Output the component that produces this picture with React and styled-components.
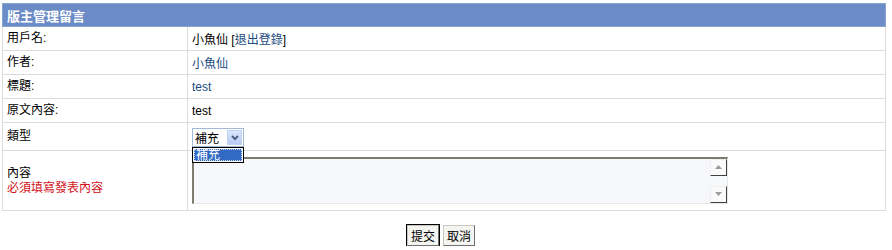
import styled, { createGlobalStyle } from "styled-components";

const Global = createGlobalStyle`
  body {
    margin: 0;
    background: #fff;
    font-family: "Liberation Sans", "Noto Sans CJK TC", Arial, sans-serif;
    font-size: 12px;
    color: #000;
  }
`;

const Page = styled.div`
  padding: 3px 6px 0 2px;
`;

const Table = styled.table`
  width: 884px;
  border-collapse: collapse;
  border: 1px solid #dcdcdc;
`;

const HeadCell = styled.th`
  background: #6b8cc6;
  color: #fff;
  font-weight: bold;
  text-align: left;
  height: 22px;
  padding: 0 4px;
  font-size: 13px;
  border: 1px solid #8aa4d2;
`;

const Label = styled.td`
  width: 176px;
  padding: 0 4px;
  height: ${(p) => p.$h || 23}px;
  border: 1px solid #dcdcdc;
  vertical-align: middle;
  line-height: 15px;
`;

const Value = styled.td`
  padding: 0 4px;
  border: 1px solid #dcdcdc;
  vertical-align: middle;
`;

const Link = styled.a`
  color: #1b4a80;
  text-decoration: none;
`;

const Warn = styled.div`
  color: #d2121a;
`;

const SelectWrap = styled.div`
  position: relative;
  display: inline-flex;
  align-items: center;
  width: 52px;
  height: 19px;
  box-sizing: border-box;
  border: 1px solid #a5b9d9;
  background: #fff;
  padding-left: 2px;
  margin-top: 2px;
`;

const SelectText = styled.span`
  flex: 1;
`;

const Arrow = styled.span`
  width: 15px;
  height: 15px;
  margin-right: 1px;
  background: linear-gradient(#dbe6fb, #b7cbf3);
  border: 1px solid #c3d3f3;
  box-sizing: border-box;
  display: flex;
  align-items: center;
  justify-content: center;
`;

const DropList = styled.div`
  position: absolute;
  left: -1px;
  top: 18px;
  width: 52px;
  height: 16px;
  box-sizing: border-box;
  border: 1px solid #000;
  background: #fff;
  padding: 1px;
  z-index: 2;
`;

const DropItem = styled.div`
  background: #316ac5;
  color: #fff;
  height: 12px;
  line-height: 12px;
  padding-left: 1px;
  border: 1px dotted #c8d4ec;
  box-sizing: border-box;
  height: 12px;
  display: flex;
  align-items: center;
`;

const Area = styled.div`
  display: flex;
  width: 536px;
  height: 47px;
  box-sizing: border-box;
  border-top: 2px solid #7d7a6e;
  border-left: 2px solid #7d7a6e;
  border-right: 1px solid #e8e8e8;
  border-bottom: 1px solid #e8e8e8;
  background: #f6f8fc;
  margin: 4px 0 5px;
`;

const AreaText = styled.div`
  flex: 1;
`;

const Scroll = styled.div`
  width: 17px;
  display: flex;
  flex-direction: column;
  justify-content: space-between;
  background: #f6f8fc;
`;

const ScrollBtn = styled.div`
  height: 17px;
  box-sizing: border-box;
  background: #fafafa;
  border-right: 1px solid #404040;
  border-bottom: 1px solid #404040;
  border-top: 1px solid #f0f0f0;
  border-left: 1px solid #f0f0f0;
  display: flex;
  align-items: center;
  justify-content: center;
`;

const Tri = ({ up }) => (
  <svg width="7" height="4" viewBox="0 0 7 4">
    <path d={up ? "M0 4 L3.5 0 L7 4 Z" : "M0 0 L3.5 4 L7 0 Z"} fill="#9a9a9a" />
  </svg>
);

const Buttons = styled.div`
  display: flex;
  justify-content: center;
  gap: 4px;
  margin-top: 14px;
  padding-right: 6px;
`;

const Button = styled.button`
  font-family: inherit;
  font-size: 12px;
  height: 21px;
  padding: 0 3px;
  background: #f4f4f0;
  border: 1px solid #c8c8c0;
  border-right-color: #707070;
  border-bottom-color: #707070;
  outline: ${(p) => (p.$focus ? "1px solid #000" : "none")};
  color: #000;
`;

export default function App() {
  return (
    <Page>
      <Global />
      <Table>
        <thead>
          <tr>
            <HeadCell colSpan={2}>版主管理留言</HeadCell>
          </tr>
        </thead>
        <tbody>
          <tr>
            <Label>用戶名:</Label>
            <Value>
              小魚仙 [<Link href="#">退出登錄</Link>]
            </Value>
          </tr>
          <tr>
            <Label>作者:</Label>
            <Value>
              <Link href="#">小魚仙</Link>
            </Value>
          </tr>
          <tr>
            <Label>標題:</Label>
            <Value>
              <Link href="#">test</Link>
            </Value>
          </tr>
          <tr>
            <Label>原文內容:</Label>
            <Value>test</Value>
          </tr>
          <tr>
            <Label $h={27}>類型</Label>
            <Value>
              <SelectWrap>
                <SelectText>補充</SelectText>
                <Arrow>
                  <svg width="8" height="6" viewBox="0 0 8 6">
                    <path d="M1 1 L4 4 L7 1" stroke="#4d6185" strokeWidth="2" fill="none" />
                  </svg>
                </Arrow>
                <DropList>
                  <DropItem>補充</DropItem>
                </DropList>
              </SelectWrap>
            </Value>
          </tr>
          <tr>
            <Label $h={59}>
              內容
              <Warn>必須填寫發表內容</Warn>
            </Label>
            <Value>
              <Area>
                <AreaText />
                <Scroll>
                  <ScrollBtn>
                    <Tri up />
                  </ScrollBtn>
                  <ScrollBtn>
                    <Tri />
                  </ScrollBtn>
                </Scroll>
              </Area>
            </Value>
          </tr>
        </tbody>
      </Table>
      <Buttons>
        <Button $focus>提交</Button>
        <Button>取消</Button>
      </Buttons>
    </Page>
  );
}
